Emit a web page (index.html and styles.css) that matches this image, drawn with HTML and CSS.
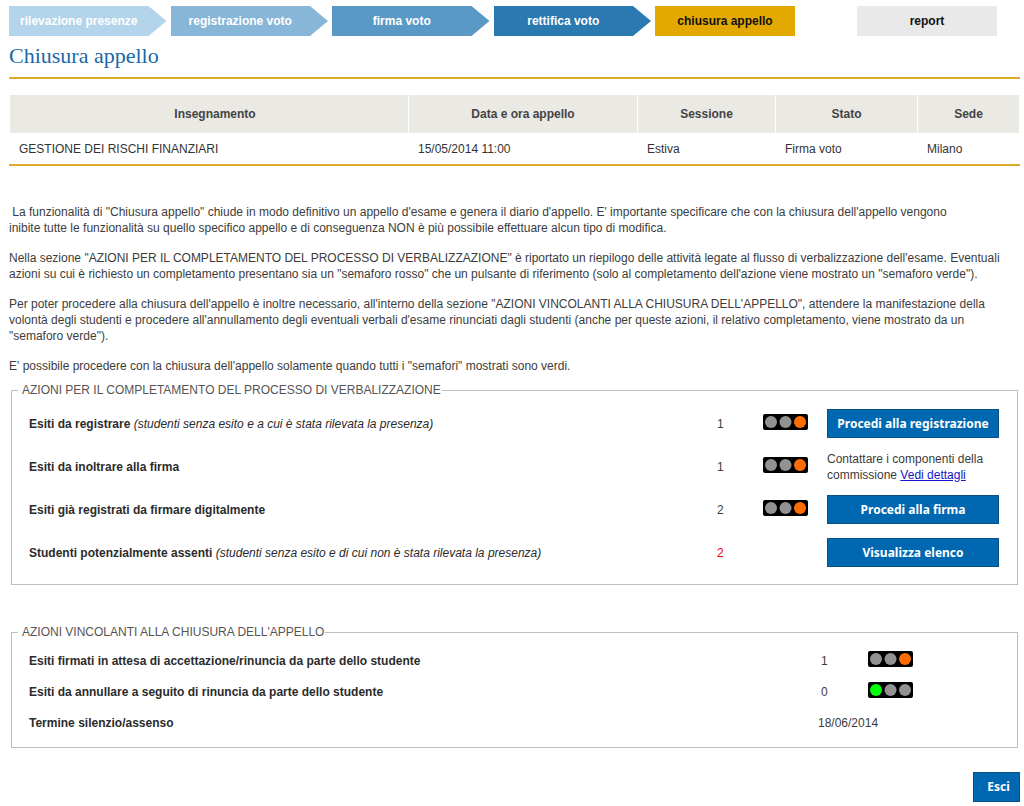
FILE: index.html
```html
<!DOCTYPE html>
<html lang="it">
<head>
<meta charset="utf-8">
<title>Chiusura appello</title>
<link rel="stylesheet" href="styles.css">
</head>
<body>
<svg class="defs" width="0" height="0" aria-hidden="true">
  <symbol id="light-orange" viewBox="0 0 45 16">
    <rect width="45" height="16" rx="2" fill="#000"/>
    <circle cx="8" cy="8" r="6" fill="#929292"/><circle cx="22.5" cy="8" r="6" fill="#929292"/><circle cx="37" cy="8" r="6" fill="#ff6d00"/>
  </symbol>
  <symbol id="light-green" viewBox="0 0 45 16">
    <rect width="45" height="16" rx="2" fill="#000"/>
    <circle cx="8" cy="8" r="6" fill="#00ff0c"/><circle cx="22.5" cy="8" r="6" fill="#929292"/><circle cx="37" cy="8" r="6" fill="#929292"/>
  </symbol>
</svg>
<main class="page">
  <nav class="steps">
    <div class="step arrow s1">rilevazione presenze</div>
    <div class="step arrow s2">registrazione voto</div>
    <div class="step arrow s3">firma voto</div>
    <div class="step arrow s4">rettifica voto</div>
    <div class="step box current">chiusura appello</div>
    <div class="step box report">report</div>
  </nav>
  <h1 class="title">Chiusura appello</h1>
  <table class="exam">
    <colgroup><col class="c1"><col class="c2"><col class="c3"><col class="c4"><col class="c5"></colgroup>
    <thead><tr><th class="first">Insegnamento</th><th>Data e ora appello</th><th>Sessione</th><th>Stato</th><th>Sede</th></tr></thead>
    <tbody><tr><td>GESTIONE DEI RISCHI FINANZIARI</td><td>15/05/2014 11:00</td><td>Estiva</td><td>Firma voto</td><td>Milano</td></tr></tbody>
  </table>
  <div class="intro">
    <p>&nbsp;La funzionalità di "Chiusura appello" chiude in modo definitivo un appello d'esame e genera il diario d'appello. E' importante specificare che con la chiusura dell'appello vengono<br>inibite tutte le funzionalità su quello specifico appello e di conseguenza NON è più possibile effettuare alcun tipo di modifica.</p>
    <p>Nella sezione "AZIONI PER IL COMPLETAMENTO DEL PROCESSO DI VERBALIZZAZIONE" è riportato un riepilogo delle attività legate al flusso di verbalizzazione dell'esame. Eventuali azioni su cui è richiesto un completamento presentano sia un "semaforo rosso" che un pulsante di riferimento (solo al completamento dell'azione viene mostrato un "semaforo verde").</p>
    <p>Per poter procedere alla chiusura dell'appello è inoltre necessario, all'interno della sezione "AZIONI VINCOLANTI ALLA CHIUSURA DELL'APPELLO", attendere la manifestazione della volontà degli studenti e procedere all'annullamento degli eventuali verbali d'esame rinunciati dagli studenti (anche per queste azioni, il relativo completamento, viene mostrato da un "semaforo verde").</p>
    <p>E' possibile procedere con la chiusura dell'appello solamente quando tutti i "semafori" mostrati sono verdi.</p>
  </div>
  <fieldset class="group actions">
    <legend>AZIONI PER IL COMPLETAMENTO DEL PROCESSO DI VERBALIZZAZIONE</legend>
    <div class="row">
      <div><b>Esiti da registrare</b> <i>(studenti senza esito e a cui è stata rilevata la presenza)</i></div>
      <div>1</div>
      <svg class="light" role="img" aria-label="semaforo rosso"><use href="#light-orange"/></svg>
      <button class="btn" type="button">Procedi alla registrazione</button>
    </div>
    <div class="row">
      <div><b>Esiti da inoltrare alla firma</b></div>
      <div>1</div>
      <svg class="light" role="img" aria-label="semaforo rosso"><use href="#light-orange"/></svg>
      <div>Contattare i componenti della commissione <a href="#">Vedi dettagli</a></div>
    </div>
    <div class="row">
      <div><b>Esiti già registrati da firmare digitalmente</b></div>
      <div>2</div>
      <svg class="light" role="img" aria-label="semaforo rosso"><use href="#light-orange"/></svg>
      <button class="btn" type="button">Procedi alla firma</button>
    </div>
    <div class="row">
      <div><b>Studenti potenzialmente assenti</b> <i>(studenti senza esito e di cui non è stata rilevata la presenza)</i></div>
      <div class="alert">2</div>
      <div></div>
      <button class="btn" type="button">Visualizza elenco</button>
    </div>
  </fieldset>
  <fieldset class="group binding">
    <legend>AZIONI VINCOLANTI ALLA CHIUSURA DELL'APPELLO</legend>
    <div class="row">
      <b>Esiti firmati in attesa di accettazione/rinuncia da parte dello studente</b>
      <div class="count">1</div>
      <svg class="light" role="img" aria-label="semaforo rosso"><use href="#light-orange"/></svg>
    </div>
    <div class="row">
      <b>Esiti da annullare a seguito di rinuncia da parte dello studente</b>
      <div class="count">0</div>
      <svg class="light" role="img" aria-label="semaforo verde"><use href="#light-green"/></svg>
    </div>
    <div class="row">
      <b>Termine silenzio/assenso</b>
      <div class="date">18/06/2014</div>
    </div>
  </fieldset>
  <div class="footer"><button class="btn exit" type="button">Esci</button></div>
</main>
</body>
</html>
```

FILE: styles.css
```css
* { box-sizing: border-box; }
body {
  margin: 0;
  background: #fff;
  color: #3c3c3c;
  font: 12px/16px "Liberation Sans", Arial, sans-serif;
}
.defs { position: absolute; }
.page { padding: 6px 4px 4px 9px; }

.steps { display: flex; gap: 4px; padding-right: 23px; }
.step {
  height: 30px;
  font-weight: bold;
  line-height: 30px;
  text-align: center;
  color: #fff;
  white-space: nowrap;
}
.arrow {
  flex: 1;
  padding-right: 18px;
  clip-path: polygon(0 0, calc(100% - 18px) 0, 100% 50%, calc(100% - 18px) 100%, 0 100%);
}
.box { flex: none; width: 140px; color: #111; }
.s1 { background: #b4d4eb; }
.s2 { background: #88b6d8; }
.s3 { background: #5a99c6; }
.s4 { background: #2a79b0; }
.current { background: #e3a900; }
.report { margin-left: 58px; background: #e9e9e9; }

.title {
  margin: 0 0 16px;
  padding: 6px 0 7px;
  border-bottom: 2px solid #dcaa2a;
  color: #1a68a8;
  font: 22px/28px "Liberation Serif", Georgia, serif;
}

.exam {
  width: 100%;
  table-layout: fixed;
  border-collapse: separate;
  border-spacing: 1px 0;
  border-bottom: 2px solid #dcaa2a;
}
.exam th { height: 38px; padding: 0; background: #eae9e4; color: #444; }
.exam .first { padding-left: 12px; }
.exam td { height: 31px; padding: 0 9px; color: #333; }
.c2 { width: 228px; }
.c3 { width: 137px; }
.c4 { width: 141px; }
.c5 { width: 101px; }

.intro { padding: 38px 18px 0 0; }
.intro p { margin: 0 0 14px; }

.group {
  margin: 0 2px;
  padding: 0 18px 0 17px;
  border: 1px solid #bdbdbd;
}
.group legend { margin-left: -11px; padding: 0 1px 0 4px; line-height: 16px; color: #555; }
.row { display: grid; align-items: center; }
.row b, .row i { color: #2b2b2b; }
.row a { color: #1414c8; }
.light { width: 45px; height: 16px; margin-bottom: 4px; }

.actions { margin-top: -6px; padding-top: 4px; padding-bottom: 10px; }
.actions .row { grid-template-columns: 1fr 46px 64px 172px; height: 43px; }
.actions .alert { color: #ee0000; }

.binding { margin-top: 39px; padding-top: 5px; padding-bottom: 9px; }
.binding .row { grid-template-columns: 1fr 50px 131px; height: 31px; }
.count { padding-left: 3px; }
.date { grid-column: span 2; }

.btn {
  width: 100%;
  height: 29px;
  padding: 0;
  border: 1px solid #0a4f86;
  background: #0068b0;
  color: #fff;
  font: bold 12px/16px "Noto Sans", Tahoma, sans-serif;
}
.footer { display: flex; justify-content: flex-end; margin-top: 24px; }
.exit { width: 47px; height: 30px; padding-left: 4px; }
```
